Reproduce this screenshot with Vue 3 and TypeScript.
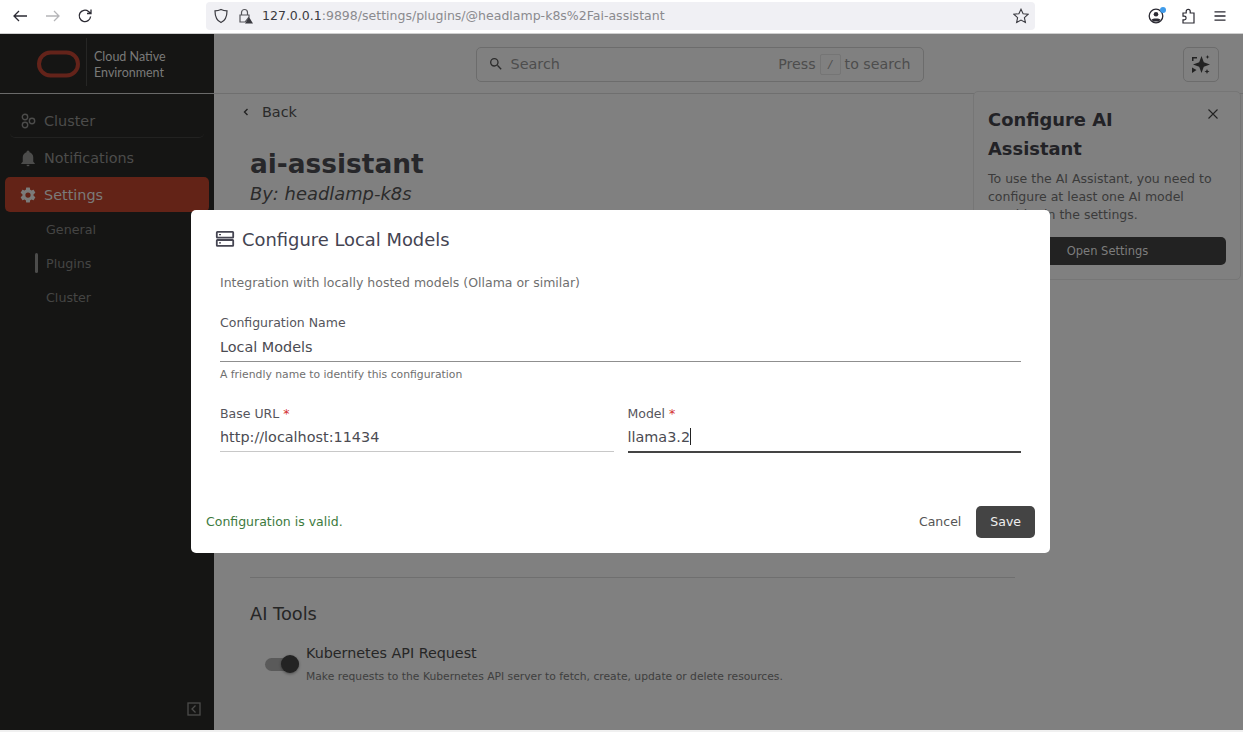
<template>
  <div class="screen">
    <!-- BROWSER BAR -->
    <header class="browser">
      <div class="nav-buttons">
        <svg width="16" height="16" viewBox="0 0 16 16" fill="none" stroke="#2b2a33" stroke-width="1.3"><path d="M15 8H2M7 3 2 8l5 5" /></svg>
        <svg width="16" height="16" viewBox="0 0 16 16" fill="none" stroke="#b5b5b8" stroke-width="1.3"><path d="M1 8h13M9 3l5 5-5 5" /></svg>
        <svg width="16" height="16" viewBox="0 0 16 16" fill="none" stroke="#2b2a33" stroke-width="1.3"><path d="M13.6 8.5A5.7 5.7 0 1 1 11.5 3.4L14 5.5M14 1.5v4h-4" /></svg>
      </div>
      <div class="urlbar">
        <svg width="16" height="16" viewBox="0 0 16 16" fill="none" stroke="#3a3a40" stroke-width="1.2"><path d="M8 1.500c2 1 4 1.400 6 1.400 0 5.500-1.500 9.500-6 11.600C3.500 12.400 2 8.400 2 2.900c2 0 4-.4 6-1.400Z" /></svg>
        <svg class="lock" width="16" height="16" viewBox="0 0 16 16"><path d="M4.500 7V4.500a3 3 0 0 1 6 0V7M3 7h9v2L8 14H3Z" fill="none" stroke="#55555a" stroke-width="1.2" /><path d="M12 9l4 6.500H8Z" fill="#3a3a40" /></svg>
        <span class="url"><b>127.0.0.1</b>:9898/settings/plugins/@headlamp-k8s%2Fai-assistant</span>
        <svg class="star" width="16" height="16" viewBox="0 0 16 16" fill="none" stroke="#3a3a40" stroke-width="1.1"><path d="m8 1.200 2.100 4.500 4.900.6-3.600 3.300 1 4.900L8 12.100l-4.400 2.400 1-4.900L1 6.300l4.900-.6Z" /></svg>
      </div>
      <div class="browser-tools">
        <span class="account">
          <svg width="16" height="16" viewBox="0 0 16 16"><circle cx="8" cy="8" r="6.8" fill="none" stroke="#2b2a33" stroke-width="1.3" /><circle cx="8" cy="6.300" r="2.300" fill="#2b2a33" /><path d="M3.500 11.500c1-1.500 8-1.500 9 0L11 13.500H5Z" fill="#2b2a33" /></svg>
          <i class="dot"></i>
        </span>
        <svg width="16" height="16" viewBox="0 0 16 16" fill="none" stroke="#2b2a33" stroke-width="1.2"><path d="M3 5h3.200V3.300a2 2 0 1 1 4 0V5H14v10H3v-3.200h1.300a1.800 1.800 0 0 0 0-3.600H3Z" /></svg>
        <svg width="16" height="16" viewBox="0 0 16 16" fill="none" stroke="#2b2a33" stroke-width="1.3"><path d="M2.500 3.800h11M2.500 8h11M2.500 12.200h11" /></svg>
      </div>
    </header>

    <div class="app">
      <!-- SIDEBAR -->
      <aside class="sidebar">
        <div class="brand">
          <svg width="44" height="28" viewBox="0 0 44 28" fill="none"><rect x="3" y="2.500" width="39" height="23" rx="11.500" stroke="#63231a" stroke-width="4" /></svg>
          <i class="brand-sep"></i>
          <span class="brand-text">Cloud Native<br />Environment</span>
        </div>
        <nav class="menu">
          <div class="item bordered">
            <svg width="18" height="18" viewBox="0 0 18 18" fill="none" stroke="#4c4c4b" stroke-width="1.4"><circle cx="6" cy="5" r="2.700" /><circle cx="6" cy="13" r="2.700" /><circle cx="13" cy="9" r="2.700" /></svg>
            <span>Cluster</span>
          </div>
          <div class="item">
            <svg width="18" height="18" viewBox="0 0 24 24" fill="#4c4c4b"><path d="M21 19v1H3v-1l2-2v-6c0-3.100 2-5.800 5-6.700V4a2 2 0 0 1 4 0v.3c3 .9 5 3.600 5 6.700v6l2 2ZM14 21a2 2 0 0 1-4 0Z" /></svg>
            <span>Notifications</span>
          </div>
          <div class="item active">
            <svg width="18" height="18" viewBox="0 0 24 24" fill="#7b7b7a"><path d="M12 15.500a3.500 3.500 0 1 1 0-7 3.500 3.500 0 0 1 0 7Zm7.430-2.530c.04-.32.07-.64.07-.97s-.03-.66-.07-1l2.110-1.630c.19-.15.24-.42.12-.64l-2-3.460c-.12-.22-.39-.31-.61-.22l-2.490 1c-.52-.39-1.060-.73-1.690-.98l-.37-2.650A.5.5 0 0 0 14 2h-4a.5.5 0 0 0-.5.420l-.37 2.650c-.63.25-1.170.59-1.690.98l-2.490-1c-.22-.09-.49 0-.61.22l-2 3.460c-.13.22-.07.49.12.64L4.570 11c-.04.34-.07.67-.07 1s.03.65.07.97l-2.110 1.660c-.19.15-.25.42-.12.64l2 3.460c.12.22.39.3.61.22l2.490-1.010c.52.4 1.060.74 1.690.99l.37 2.650c.04.24.25.42.5.42h4c.25 0 .46-.18.5-.42l.37-2.650c.63-.26 1.170-.59 1.690-.99l2.490 1.010c.22.08.49 0 .61-.22l2-3.460c.12-.22.07-.49-.12-.64l-2.110-1.660Z" /></svg>
            <span>Settings</span>
          </div>
          <div class="sub">General</div>
          <div class="sub current">Plugins</div>
          <div class="sub">Cluster</div>
        </nav>
        <div class="collapse">
          <svg width="14" height="14" viewBox="0 0 14 14" fill="none" stroke="#4c4c4b" stroke-width="1.3"><rect x="1" y="1" width="12" height="12" /><path d="M8.500 3.500 5 7l3.500 3.500" /></svg>
        </div>
      </aside>

      <!-- MAIN -->
      <div class="main">
        <div class="topbar">
          <div class="search">
            <svg width="16" height="16" viewBox="0 0 24 24" fill="#2c2c2c"><path d="M15.500 14h-.79l-.28-.27A6.470 6.470 0 0 0 16 9.500 6.500 6.500 0 1 0 9.500 16c1.610 0 3.090-.59 4.230-1.570l.27.28v.79l5 4.990L20.490 19l-4.990-5Zm-6 0a4.500 4.500 0 1 1 0-9 4.500 4.500 0 0 1 0 9Z" /></svg>
            <span class="search-label">Search</span>
            <span class="search-hint">Press <kbd>/</kbd> to search</span>
          </div>
          <button class="ai-button">
            <svg width="22" height="22" viewBox="0 0 22 22" fill="#222"><path d="M11.500 2 13.800 8.200 20 10.500 13.800 12.800 11.500 19 9.200 12.800 3 10.500 9.200 8.200ZM2 3h5v1.500H3.500V7H2ZM17.500 1l.6 1.400 1.400.6-1.400.6-.6 1.400-.6-1.400-1.400-.6 1.400-.6ZM2 13.500l4.500 2.500L2 19ZM17 15l.7 1.800 1.800.7-1.800.7L17 20l-.7-1.800-1.800-.7 1.800-.7Z" /></svg>
          </button>
        </div>
        <div class="content">
          <div class="back">
            <svg width="10" height="10" viewBox="0 0 10 10" fill="none" stroke="#222" stroke-width="1.4"><path d="M6.500 2 3.500 5l3 3" /></svg>
            <span>Back</span>
          </div>
          <h1>ai-assistant</h1>
          <p class="by">By: headlamp-k8s</p>
          <div class="spacer"></div>
          <hr />
          <h2>AI Tools</h2>
          <div class="tool">
            <span class="switch"><i></i></span>
            <div>
              <div class="tool-name">Kubernetes API Request</div>
              <div class="tool-desc">Make requests to the Kubernetes API server to fetch, create, update or delete resources.</div>
            </div>
          </div>
        </div>
      </div>

      <!-- POPOVER -->
      <div class="popover">
        <svg class="close" width="12" height="12" viewBox="0 0 12 12" fill="none" stroke="#222" stroke-width="1.1"><path d="m1.500 1.500 9 9M10.500 1.500l-9 9" /></svg>
        <h3>Configure AI<br />Assistant</h3>
        <p>To use the AI Assistant, you need to configure at least one AI model provider in the settings.</p>
        <button>Open Settings</button>
      </div>
    </div>

    <!-- MODAL -->
    <section class="modal">
      <div class="modal-title">
        <svg width="20" height="20" viewBox="0 0 20 20" fill="none" stroke="#454552" stroke-width="1.8"><rect x="1.800" y="2.800" width="16.400" height="5.800" rx=".6" /><rect x="1.800" y="11" width="16.400" height="5.800" rx=".6" /><path stroke-width="1.200" d="M4 5.700h2M4 13.900h2" /></svg>
        <span>Configure Local Models</span>
      </div>
      <div class="modal-body">
        <p class="intro">Integration with locally hosted models (Ollama or similar)</p>
        <div class="field">
          <label>Configuration Name</label>
          <div class="value">Local Models</div>
          <small>A friendly name to identify this configuration</small>
        </div>
        <div class="two-cols">
          <div class="field">
            <label>Base URL <em>*</em></label>
            <div class="value light">http://localhost:11434</div>
          </div>
          <div class="field">
            <label>Model <em>*</em></label>
            <div class="value focused">llama3.2<i class="caret"></i></div>
          </div>
        </div>
      </div>
      <div class="modal-footer">
        <span class="valid">Configuration is valid.</span>
        <div class="actions">
          <button class="cancel">Cancel</button>
          <button class="save">Save</button>
        </div>
      </div>
    </section>
  </div>
</template>

<script setup lang="ts">
</script>

<style>
html,
body {
  margin: 0;
  background: #f0f0f0;
  overflow: hidden;
}
</style>

<style scoped>
.screen {
  position: relative;
  width: 1243px;
  height: 732px;
  display: flex;
  flex-direction: column;
  overflow: hidden;
  font-family: "DejaVu Sans", sans-serif;
  color: #222;
}

/* BROWSER BAR */
.browser {
  height: 33px;
  flex: none;
  box-sizing: border-box;
  background: #fff;
  display: flex;
  align-items: center;
  padding: 0 15px 2px 12px;
}

.nav-buttons {
  display: flex;
  gap: 16.5px;
  width: 194px;
  flex: none;
}

.urlbar {
  width: 829px;
  height: 28px;
  flex: none;
  box-sizing: border-box;
  background: #f0f0f4;
  border-radius: 4px;
  display: flex;
  align-items: center;
  padding: 0 6px 0 7px;
}

.lock {
  margin-left: 8px;
}

.url {
  margin-left: 9px;
  font-size: 12.52px;
  color: #8a8a8e;
  white-space: nowrap;
}

.url b {
  font-weight: 400;
  color: #3a3a40;
}

.star {
  margin-left: auto;
}

.browser-tools {
  margin-left: auto;
  display: flex;
  align-items: center;
  gap: 16px;
}

.account {
  position: relative;
  display: flex;
}

.dot {
  position: absolute;
  top: -1px;
  right: -2px;
  width: 6px;
  height: 6px;
  border-radius: 50%;
  background: #3f9bea;
}

.app {
  position: relative;
  height: 696px;
  flex: none;
  display: flex;
  border-top: 1px solid #cfcfcf;
}

/* SIDEBAR */
.sidebar {
  width: 214px;
  flex: none;
  background: #151514;
  display: flex;
  flex-direction: column;
}

.brand {
  height: 60px;
  flex: none;
  box-sizing: border-box;
  display: flex;
  align-items: center;
  padding-left: 36px;
  border-bottom: 1px solid #6a6a6a;
}

.brand-sep {
  width: 1px;
  height: 48px;
  margin: 0 7px 4px 6px;
  background: #262625;
}

.brand-text {
  margin-top: 2px;
  font-family: "Lato", sans-serif;
  font-size: 12.5px;
  line-height: 16px;
  color: #7a7a79;
}

.menu {
  padding: 8px 5px 0;
  flex: 1;
}

.item {
  height: 35px;
  display: flex;
  align-items: center;
  gap: 7px;
  padding-left: 14px;
  font-size: 14.4px;
  color: #4c4c4b;
  margin-bottom: 2px;
  border-radius: 5px;
}

.bordered {
  height: 36px;
  box-sizing: border-box;
  padding: 2px 0 0 9px;
  border-bottom: 1px solid #222221;
  margin: 0 5px 2px;
}

.active {
  margin-bottom: 0;
  background: #632317;
  color: #7b7b7a;
}

.sub {
  height: 34px;
  display: flex;
  align-items: center;
  padding-left: 41px;
  font-size: 12.7px;
  color: #454544;
}

.current {
  position: relative;
}

.current::before {
  content: "";
  position: absolute;
  left: 30px;
  top: 7px;
  width: 3px;
  height: 20px;
  border-radius: 2px;
  background: #4c4c4b;
}

.collapse {
  display: flex;
  justify-content: flex-end;
  padding: 0 13px 14px 0;
}

/* MAIN */
.main {
  flex: 1;
  background: #808080;
  display: flex;
  flex-direction: column;
}

.topbar {
  height: 60px;
  flex: none;
  box-sizing: border-box;
  position: relative;
  display: flex;
  align-items: center;
  justify-content: center;
  border-bottom: 1px solid #6f6f6f;
  padding-right: 58px;
}

.search {
  width: 448px;
  height: 35px;
  margin-top: 1px;
  box-sizing: border-box;
  border: 1px solid #6c6c6c;
  border-radius: 5px;
  display: flex;
  align-items: center;
  padding: 0 12px 0 11px;
  font-size: 14.4px;
  color: #4d4d4d;
}

.search-label {
  margin-left: 7px;
}

.search-hint {
  margin-left: auto;
  display: flex;
  align-items: center;
  font-size: 14.2px;
}

kbd {
  width: 21px;
  height: 21px;
  margin: 0 4px;
  box-sizing: border-box;
  border: 1px solid #757575;
  border-radius: 2px;
  display: flex;
  align-items: center;
  justify-content: center;
  font-family: inherit;
  font-size: 11px;
  font-style: italic;
}

.ai-button {
  position: absolute;
  right: 24px;
  top: 13px;
  width: 36px;
  height: 35px;
  padding: 0;
  border: 1px solid #6c6c6c;
  border-radius: 5px;
  background: transparent;
  display: flex;
  align-items: center;
  justify-content: center;
}

.content {
  flex: 1;
  padding: 8px 228px 0 36px;
}

.back {
  display: flex;
  align-items: center;
  gap: 11px;
  height: 20px;
  margin-left: -9px;
  font-size: 14.4px;
  color: #2a2a2a;
}

h1 {
  margin: 26px 0 0;
  font-size: 26.4px;
  line-height: 32px;
  font-weight: 700;
  color: #27272a;
}

.by {
  margin: 2px 0 0;
  font-size: 17.9px;
  line-height: 24px;
  font-style: italic;
  color: #2b2b2b;
}

.spacer {
  height: 371px;
}

hr {
  margin: 0;
  border: 0;
  border-top: 1px solid #6f6f6f;
}

h2 {
  margin: 25px 0 0;
  font-size: 17.8px;
  line-height: 21px;
  font-weight: 400;
  color: #262626;
}

.tool {
  display: flex;
  gap: 7px;
  margin: 19px 0 0 15px;
}

.switch {
  position: relative;
  width: 34px;
  height: 13px;
  margin-top: 15px;
  border-radius: 7px;
  background: #5a5a5a;
}

.switch i {
  position: absolute;
  right: 0;
  top: -3px;
  width: 18px;
  height: 18px;
  border-radius: 50%;
  background: #232323;
  box-shadow: 0 1px 3px rgba(0, 0, 0, 0.4);
}

.tool-name {
  font-size: 14.3px;
  line-height: 20px;
  color: #262626;
}

.tool-desc {
  margin-top: 6px;
  font-size: 10.76px;
  line-height: 16px;
  color: #3e3e3e;
}

/* POPOVER */
.popover {
  position: absolute;
  left: 973px;
  top: 57px;
  width: 268px;
  height: 189px;
  box-sizing: border-box;
  padding: 13px 14px;
  background: #808080;
  border: 1px solid #767676;
  border-radius: 5px;
}

.close {
  position: absolute;
  right: 21px;
  top: 16px;
}

h3 {
  margin: 0;
  font-size: 17.9px;
  line-height: 29px;
  font-weight: 700;
  color: #222226;
}

.popover p {
  margin: 7px 0 0;
  width: 236px;
  font-size: 12.5px;
  line-height: 18px;
  color: #3b3b3b;
}

.popover button {
  position: absolute;
  left: 15px;
  top: 145px;
  width: 237px;
  height: 28px;
  border: 0;
  border-radius: 5px;
  background: #222;
  color: #7d7d7d;
  font-family: inherit;
  font-size: 11.5px;
  padding: 0;
}

/* MODAL */
.modal {
  position: absolute;
  left: 191px;
  top: 210px;
  width: 859px;
  height: 343px;
  box-sizing: border-box;
  background: #fff;
  border-radius: 5px;
  display: flex;
  flex-direction: column;
}

.modal-title {
  display: flex;
  align-items: center;
  gap: 7px;
  padding: 17px 24px 0;
  height: 24px;
  font-size: 17.9px;
  color: #444452;
}

.modal-body {
  padding: 22px 29px 0;
  flex: 1;
}

.intro {
  margin: 0;
  font-size: 12.5px;
  line-height: 19px;
  color: #6f6f6f;
}

.field {
  margin-top: 21px;
  display: flex;
  flex-direction: column;
}

.field label {
  font-size: 12.5px;
  line-height: 20px;
  color: #55555c;
}

.field em {
  font-style: normal;
  color: #d32f2f;
}

.value {
  height: 29px;
  box-sizing: border-box;
  padding-top: 4px;
  font-size: 14.4px;
  line-height: 20px;
  color: #4b4b52;
  border-bottom: 1px solid #8f8f8f;
}

.light {
  height: 28px;
  padding-top: 3px;
  border-bottom-color: #c8c8c8;
}

.focused {
  padding-top: 3px;
  border-bottom: 2px solid #444;
}

.caret {
  display: inline-block;
  width: 1px;
  height: 17px;
  background: #222;
  vertical-align: -3px;
}

.field small {
  margin-top: 5px;
  font-size: 10.8px;
  line-height: 16px;
  color: #6f6f6f;
}

.two-cols {
  display: grid;
  grid-template-columns: 1fr 1fr;
  gap: 14px;
}

.modal-footer {
  display: flex;
  align-items: center;
  justify-content: space-between;
  padding: 0 15px 15px;
}

.valid {
  padding-bottom: 2px;
  font-size: 12.5px;
  color: #3d7a3d;
}

.actions {
  display: flex;
  align-items: center;
  gap: 1px;
}

.actions button {
  height: 32px;
  border: 0;
  border-radius: 5px;
  font-family: inherit;
  font-size: 12.5px;
  padding: 0 14px 1px;
}

.cancel {
  background: transparent;
  color: #555;
}

.save {
  background: #444;
  color: #eee;
}
</style>
